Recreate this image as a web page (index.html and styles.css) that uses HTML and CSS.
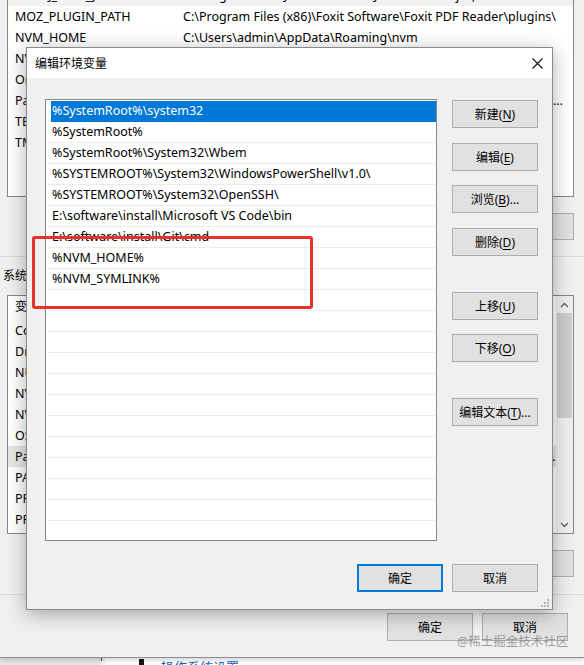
FILE: index.html
```html
<!DOCTYPE html>
<html lang="zh-CN">
<head>
<meta charset="utf-8">
<title>编辑环境变量</title>
<link rel="stylesheet" href="styles.css">
</head>
<body>
<div class="screen">
  <div class="parent">
    <div class="lv user-lv">
      <div class="lv-row row-hot"><span>IntelliJ_IDEA_Java</span><span>C:\Program Files\JetBrains\IntelliJ IDEA 2022.1\jbr;</span></div>
      <div class="lv-row"><span>MOZ_PLUGIN_PATH</span><span>C:\Program Files (x86)\Foxit Software\Foxit PDF Reader\plugins\</span></div>
      <div class="lv-row"><span>NVM_HOME</span><span>C:\Users\admin\AppData\Roaming\nvm</span></div>
      <div class="lv-row"><span>NVM_SYMLINK</span><span>C:\Program Files\nodejs</span></div>
      <div class="lv-row"><span>OneDrive</span><span>C:\Users\admin\OneDrive</span></div>
      <div class="lv-row"><span>Path</span><span>C:\Users\admin\AppData\Local\Microsoft\WindowsApps;E:\software\install\Microsoft VS Code\bin;C:\Users\admin\AppData\Roaming\npm</span></div>
      <div class="lv-row"><span>TEMP</span><span>C:\Users\admin\AppData\Local\Temp</span></div>
      <div class="lv-row"><span>TMP</span><span>C:\Users\admin\AppData\Local\Temp</span></div>
    </div>
    <div class="btnrow">
      <button class="pbtn">新建(<u>N</u>)...</button>
      <button class="pbtn">编辑(<u>E</u>)...</button>
      <button class="pbtn">删除(<u>D</u>)</button>
    </div>
    <div class="rule"></div>
    <div class="grp-label">系统变量(<u>S</u>)</div>
    <div class="lv sys-lv">
      <div class="sys-body">
        <div class="lv-row lv-head"><span>变量</span><span>值</span></div>
        <div class="lv-row"><span>ComSpec</span><span>C:\WINDOWS\system32\cmd.exe</span></div>
        <div class="lv-row"><span>DriverData</span><span>C:\Windows\System32\Drivers\DriverData</span></div>
        <div class="lv-row"><span>NUMBER_OF_PROCESSORS</span><span>8</span></div>
        <div class="lv-row"><span>NVM_HOME</span><span>C:\Users\admin\AppData\Roaming\nvm</span></div>
        <div class="lv-row"><span>NVM_SYMLINK</span><span>C:\Program Files\nodejs</span></div>
        <div class="lv-row"><span>OS</span><span>Windows_NT</span></div>
        <div class="lv-row row-sel"><span>Path</span><span>C:\WINDOWS\system32;C:\WINDOWS;C:\WINDOWS\System32\Wbem;C:\WINDOWS\System32\WindowsPowerShell\v1.0\</span></div>
        <div class="lv-row"><span>PATHEXT</span><span>.COM;.EXE;.BAT;.CMD;.VBS;.VBE;.JS;.JSE;.WSF;.WSH;.MSC</span></div>
        <div class="lv-row"><span>PROCESSOR_ARCHITECTURE</span><span>AMD64</span></div>
        <div class="lv-row"><span>PROCESSOR_IDENTIFIER</span><span>Intel64 Family 6 Model 140 Stepping 1, GenuineIntel</span></div>
      </div>
      <div class="sb">
        <div class="sb-arrow"><svg width="9" height="6" viewBox="0 0 9 6"><path d="M1 5 L4.5 1.5 L8 5" fill="none" stroke="#606060" stroke-width="1.3"/></svg></div>
        <div class="sb-thumb"></div>
        <div class="sb-fill"></div>
        <div class="sb-arrow"><svg width="9" height="6" viewBox="0 0 9 6"><path d="M1 1 L4.5 4.5 L8 1" fill="none" stroke="#606060" stroke-width="1.3"/></svg></div>
      </div>
    </div>
    <div class="btnrow">
      <button class="pbtn">新建(<u>W</u>)...</button>
      <button class="pbtn">编辑(<u>I</u>)...</button>
      <button class="pbtn">删除(<u>L</u>)</button>
    </div>
    <div class="rule rule-b"></div>
    <div class="pfoot">
      <button class="pbtn tall">确定</button>
      <button class="pbtn tall">取消</button>
    </div>
  </div>
  <div class="taskstrip">
    <div class="ts-left"></div>
    <div class="ts-tick"></div>
    <div class="ts-main">
      <svg class="ts-icon" width="11" height="10" viewBox="0 0 11 10"><path d="M6 0 H11 V10 H0 V6 H6 Z" fill="#111"/></svg>
      <span class="ts-link">操作系统设置</span>
    </div>
  </div>

  <div class="dlg">
    <div class="dlg-title">
      <span>编辑环境变量</span>
      <svg width="11" height="11" viewBox="0 0 11 11"><path d="M0.5 0.5 L10.5 10.5 M10.5 0.5 L0.5 10.5" stroke="#111" stroke-width="1.1" fill="none"/></svg>
    </div>
    <div class="dlg-body">
      <div class="edit-list">
        <div class="erow sel">%SystemRoot%\system32</div>
        <div class="erow">%SystemRoot%</div>
        <div class="erow">%SystemRoot%\System32\Wbem</div>
        <div class="erow">%SYSTEMROOT%\System32\WindowsPowerShell\v1.0\</div>
        <div class="erow">%SYSTEMROOT%\System32\OpenSSH\</div>
        <div class="erow">E:\software\install\Microsoft VS Code\bin</div>
        <div class="erow">E:\software\install\Git\cmd</div>
        <div class="erow">%NVM_HOME%</div>
        <div class="erow">%NVM_SYMLINK%</div>
        <div class="erow"></div>
        <div class="erow"></div>
        <div class="erow"></div>
        <div class="erow"></div>
        <div class="erow"></div>
        <div class="erow"></div>
        <div class="erow"></div>
        <div class="erow"></div>
        <div class="erow"></div>
        <div class="erow"></div>
        <div class="erow"></div>
        <div class="erow"></div>
      </div>
      <div class="btncol">
        <button class="dbtn">新建(<u>N</u>)</button>
        <button class="dbtn">编辑(<u>E</u>)</button>
        <button class="dbtn">浏览(<u>B</u>)...</button>
        <button class="dbtn">删除(<u>D</u>)</button>
        <button class="dbtn push">上移(<u>U</u>)</button>
        <button class="dbtn">下移(<u>O</u>)</button>
        <button class="dbtn push">编辑文本(<u>T</u>)...</button>
      </div>
    </div>
    <div class="dlg-foot">
      <button class="dbtn default">确定</button>
      <button class="dbtn">取消</button>
    </div>
    <svg class="grip" width="8" height="8" viewBox="0 0 8 8">
      <rect x="6" y="0" width="2" height="2" fill="#b4b4b4"/>
      <rect x="3" y="3" width="2" height="2" fill="#b4b4b4"/>
      <rect x="6" y="3" width="2" height="2" fill="#b4b4b4"/>
      <rect x="0" y="6" width="2" height="2" fill="#b4b4b4"/>
      <rect x="3" y="6" width="2" height="2" fill="#b4b4b4"/>
      <rect x="6" y="6" width="2" height="2" fill="#b4b4b4"/>
    </svg>
  </div>

  <div class="annot"></div>
  <div class="wm">@稀土掘金技术社区</div>
</div>
</body>
</html>
```
FILE: styles.css
```css
* { box-sizing: border-box; }
html, body { margin: 0; padding: 0; }
body {
  width: 584px;
  height: 665px;
  overflow: hidden;
  background: #f0f0f0;
  font-family: "Noto Sans", "Noto Sans CJK SC", sans-serif;
  font-size: 12.5px;
  color: #000;
}
button {
  font-family: "Noto Sans", "Noto Sans CJK SC", sans-serif;
  font-size: 12px;
  color: #000;
  padding: 0;
  white-space: nowrap;
}
u { text-underline-offset: 2px; }

.screen {
  position: relative;
  width: 584px;
  height: 665px;
  overflow: hidden;
}

/* parent window */
.parent {
  height: 658px;
  padding: 0 10px 0 7px;
  border-bottom: 1px solid #8f8f8f;
  background: #f0f0f0;
  display: flex;
  flex-direction: column;
  position: relative;
  z-index: 1;
  box-shadow: 0 2px 5px rgba(0, 0, 0, 0.18);
}
.lv {
  background: #fff;
  border: 1px solid #828790;
}
.user-lv {
  margin-top: -16px;
  height: 213px;
  overflow: hidden;
  flex: none;
}
.lv-row {
  display: grid;
  grid-template-columns: 168px 383px;
  height: 21px;
  line-height: 21px;
  padding-left: 7px;
  white-space: nowrap;
}
.lv-row span {
  overflow: hidden;
  text-overflow: ellipsis;
}
.row-hot { background: #f2f2f2; }
.row-sel { background: #e6e6e6; }
.btnrow {
  display: flex;
  justify-content: flex-end;
  gap: 9px;
  margin-top: 16px;
  flex: none;
}
.pbtn {
  width: 86px;
  height: 27px;
  background: #e1e1e1;
  border: 1px solid #adadad;
}
.pbtn.tall { height: 28px; }
.rule {
  height: 1px;
  background: #dadada;
  margin: 16px -10px 0 -7px;
  flex: none;
}
.rule-b { margin-top: 17px; }
.grp-label {
  margin: 10px 0 0 -4px;
  line-height: 18px;
  font-size: 12px;
  flex: none;
}
.sys-lv {
  margin-top: 10px;
  height: 239px;
  display: flex;
  flex: none;
}
.sys-body {
  flex: 1;
  min-width: 0;
  overflow: hidden;
}
.lv-head {
  height: 24px;
  line-height: 22px;
  font-size: 12px;
}
.sb {
  width: 17px;
  background: #f0f0f0;
  display: flex;
  flex-direction: column;
}
.sb-arrow {
  height: 17px;
  display: flex;
  align-items: center;
  justify-content: center;
  flex: none;
}
.sb-thumb {
  height: 105px;
  margin: 0 1px;
  background: #cdcdcd;
  flex: none;
}
.sb-fill { flex: 1; }
.pfoot {
  display: flex;
  justify-content: flex-end;
  gap: 9px;
  margin-top: 18px;
  padding-right: 6px;
  flex: none;
}

/* strip below parent */
.taskstrip {
  height: 7px;
  display: flex;
  overflow: hidden;
}
.ts-left { width: 101px; background: #e6e6e6; }
.ts-tick { width: 1px; height: 3px; background: #444; }
.ts-main {
  flex: 1;
  background: #fff;
  margin-left: 3px;
  padding-left: 28px;
  display: flex;
  align-items: flex-start;
  gap: 17px;
}
.ts-icon { margin-top: 1px; flex: none; }
.ts-link {
  color: #0a64c8;
  font-size: 13px;
  line-height: 13px;
  margin-top: 3px;
  white-space: nowrap;
}

/* edit dialog */
.dlg {
  position: absolute;
  left: 26px;
  top: 47px;
  width: 527px;
  height: 563px;
  border: 1px solid #8a8a8a;
  background: #f0f0f0;
  box-shadow: 0 4px 18px rgba(0, 0, 0, 0.32);
  display: flex;
  flex-direction: column;
  z-index: 2;
}
.dlg-title {
  height: 30px;
  background: #fff;
  display: flex;
  align-items: center;
  justify-content: space-between;
  padding: 0 9px 0 8px;
  font-size: 12px;
  flex: none;
}
.dlg-body {
  display: grid;
  grid-template-columns: 392px 86px;
  column-gap: 15px;
  padding: 21px 14px 0 18px;
}
.edit-list {
  height: 442px;
  background: #fff;
  border: 1px solid #828790;
  padding: 1px 0 0 2px;
  overflow: hidden;
}
.erow {
  height: 21px;
  line-height: 20px;
  border-bottom: 1px solid #ececec;
  padding-left: 4px;
  white-space: nowrap;
}
.erow.sel {
  margin-left: 3px;
  padding-left: 1px;
  background: #0078d7;
  border-bottom-color: #0078d7;
  color: #fff;
}
.btncol {
  display: flex;
  flex-direction: column;
  gap: 14.5px;
  padding-top: 1px;
}
.dbtn {
  width: 86px;
  height: 28px;
  background: #e1e1e1;
  border: 1px solid #adadad;
  flex: none;
}
.dbtn.push { margin-top: 21.5px; }
.dbtn.default { border: 2px solid #0078d7; }
.dlg-foot {
  display: flex;
  justify-content: flex-end;
  gap: 9px;
  padding-right: 14px;
  margin-top: 23px;
}
.grip {
  position: absolute;
  right: 3px;
  bottom: 2px;
}

/* annotation + watermark overlays */
.annot {
  position: absolute;
  left: 32px;
  top: 236px;
  width: 281px;
  height: 73px;
  border: 3px solid #e5322d;
  border-radius: 3px;
  z-index: 3;
}
.wm {
  position: absolute;
  left: 457px;
  top: 631px;
  font-size: 12.5px;
  color: rgba(130, 130, 130, 0.75);
  z-index: 3;
  white-space: nowrap;
}
```
